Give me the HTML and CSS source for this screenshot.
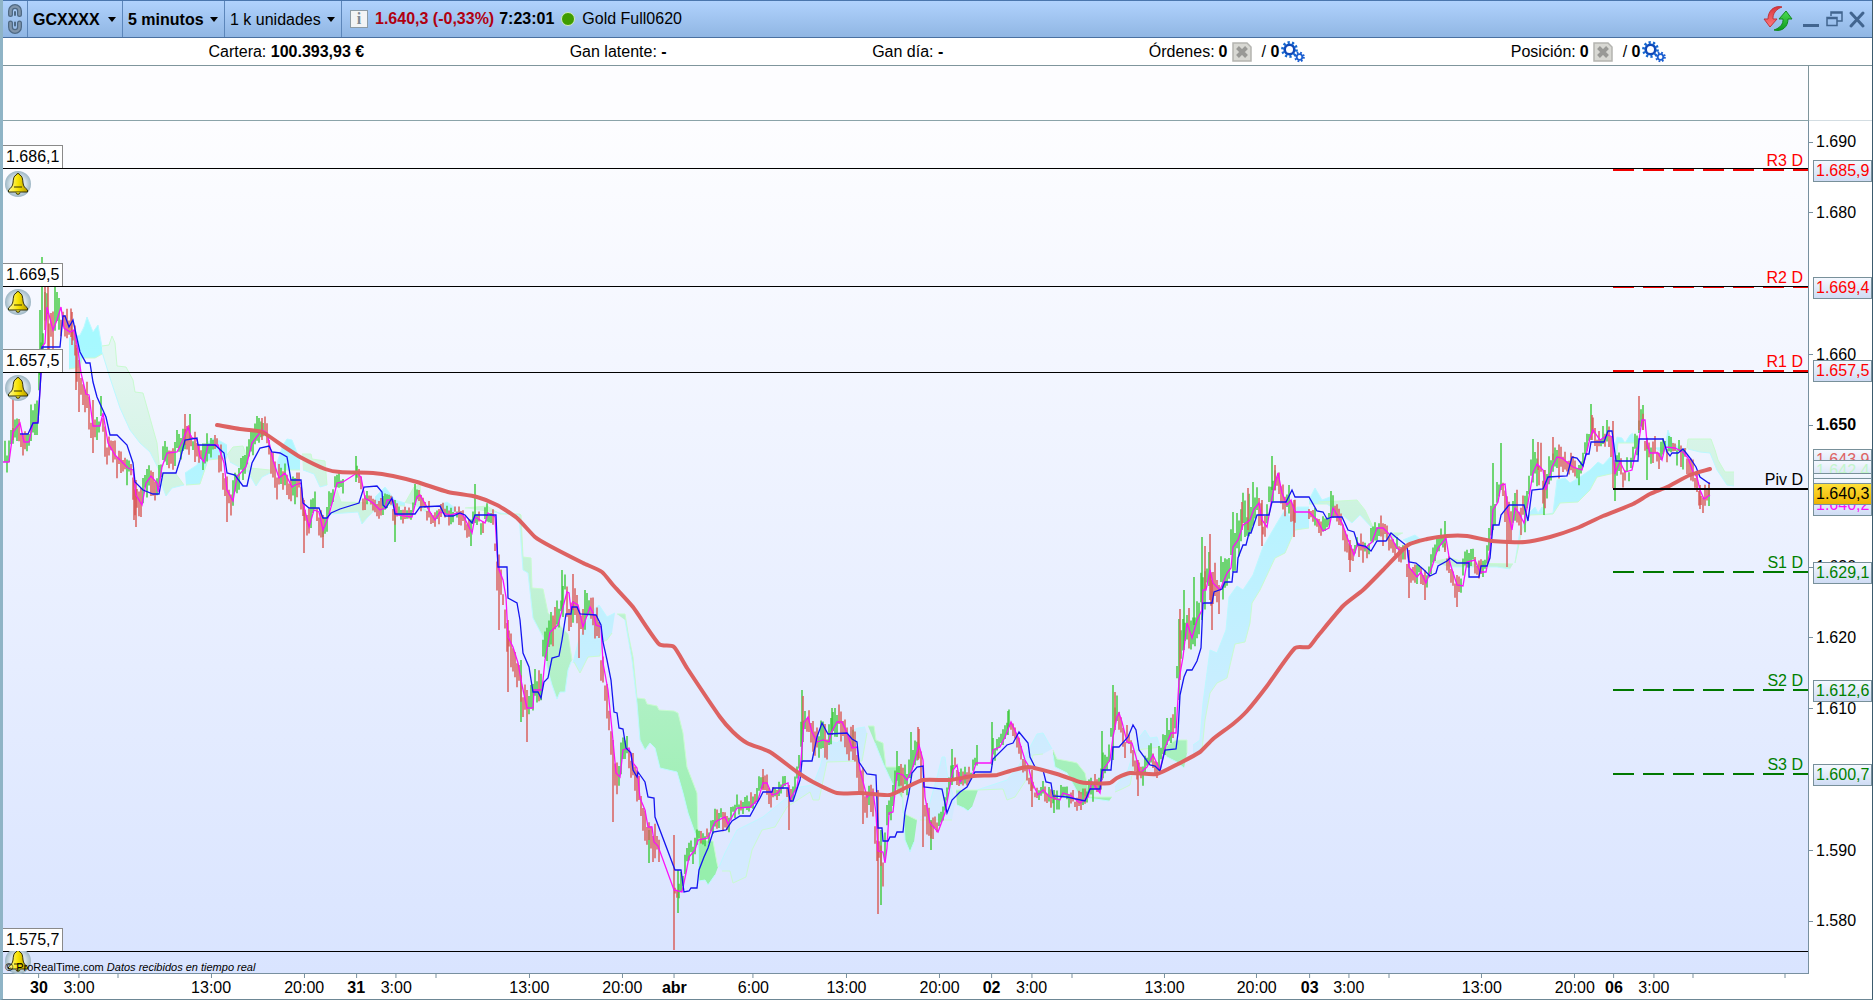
FILE: index.html
```
<!DOCTYPE html>
<html lang="es">
<head>
    <meta charset="UTF-8">
    <meta name="viewport" content="width=device-width, initial-scale=1.0">
    <title>GCXXXX - 5 minutos</title>
    <link rel="stylesheet" href="styles.css">
</head>
<body>
    <svg class="defs" aria-hidden="true">
        <defs>
            <linearGradient id="bellFill" x1="0" x2="1">
                <stop offset="0" stop-color="#fff9a0"/>
                <stop offset="0.5" stop-color="#f8e400"/>
                <stop offset="1" stop-color="#b89c00"/>
            </linearGradient>
            <radialGradient id="bellBack">
                <stop offset="0" stop-color="#f4f8fa"/>
                <stop offset="0.6" stop-color="#d5e2e9"/>
                <stop offset="1" stop-color="#9db6c4"/>
            </radialGradient>
            <linearGradient id="arrowRed" x1="0" x2="0" y1="0" y2="1">
                <stop offset="0" stop-color="#d8343c"/>
                <stop offset="1" stop-color="#ff7a7e"/>
            </linearGradient>
            <linearGradient id="arrowGreen" x1="0" x2="0" y1="0" y2="1">
                <stop offset="0" stop-color="#4fdc55"/>
                <stop offset="1" stop-color="#0c9a1c"/>
            </linearGradient>
        </defs>
        <symbol id="bell" viewBox="0 0 26 26">
            <circle cx="13" cy="13" r="13" fill="url(#bellBack)"/>
            <path d="M13 2.500c-1 0-1.500.6-1.700 1.400C8.500 5 8.400 8 8 12c-.3 3-2 5-4.500 7v2h19v-2C20 17 18.300 15 18 12c-.4-4-.5-7-3.300-8.100C14.500 3.100 14 2.500 13 2.500z" fill="url(#bellFill)" stroke="#33300a"/>
            <path d="M9 16h8M11 21.500a2 1.800 0 0 0 4 0" fill="#f0dc00" stroke="#33300a"/>
        </symbol>
        <symbol id="cancel" viewBox="0 0 20 20">
            <path d="M1 1h14l4 4v14H1z" fill="#d8d8d3" stroke="#b4b4b0" stroke-width="1.500"/>
            <path d="M5.500 5.500l9 9M14.500 5.500l-9 9" stroke="#999996" stroke-width="4"/>
        </symbol>
        <symbol id="gears" viewBox="0 0 24 22">
            <circle cx="8.500" cy="8.500" r="4.800" fill="none" stroke="#1048b8" stroke-width="2.600"/>
            <circle cx="8.500" cy="8.500" r="6.900" fill="none" stroke="#1668d0" stroke-width="3" stroke-dasharray="2.170 2.170"/>
            <circle cx="18.500" cy="16" r="2.800" fill="none" stroke="#1c5fd0" stroke-width="1.800"/>
            <circle cx="18.500" cy="16" r="4.300" fill="none" stroke="#1c5fd0" stroke-width="2" stroke-dasharray="1.700 1.700"/>
        </symbol>
    </svg>

    <div class="window">
        <header class="toolbar">
            <button class="link-button" aria-label="Vincular">
                <svg width="16" height="30" viewBox="0 0 16 30" fill="none" stroke-linecap="round">
                    <path d="M3.500 10.500V7a4.500 4.500 0 0 1 9 0v3.500M3.500 19v4a4.500 4.500 0 0 0 9 0v-4" stroke="#4e6984" stroke-width="5"/>
                    <path d="M3.500 10.500V7a4.500 4.500 0 0 1 9 0v3.500M3.500 19v4a4.500 4.500 0 0 0 9 0v-4" stroke="#8095ab" stroke-width="2.500"/>
                    <path d="M8 8v3M8 18.500v3" stroke="#4e6984" stroke-width="2"/>
                </svg>
            </button>
            <div class="picker picker-code">
                <select class="bold" aria-label="Valor"><option>GCXXXX</option></select>
            </div>
            <div class="picker picker-time">
                <select class="bold" aria-label="Marco temporal"><option>5 minutos</option></select>
            </div>
            <div class="picker picker-units">
                <select aria-label="Unidades"><option>1 k unidades</option></select>
            </div>
            <div class="quote">
                <button class="info" aria-label="Información">i</button>
                <span class="price">1.640,3 (-0,33%)</span>
                <span class="bold">7:23:01</span>
                <span class="status"></span>
                <span>Gold Full0620</span>
            </div>
            <div class="window-buttons">
                <button class="refresh" aria-label="Actualizar">
                    <svg width="30" height="28" viewBox="0 0 30 28">
                        <path d="M19 2C11 0 5 6 5 14H1l6 8 7-8h-4c-.5-5 3-10 9-12z" fill="url(#arrowRed)" stroke="#c0343a"/>
                        <path d="M11 25c8 2 14-3 14-11h4l-6-8-7 8h4c.5 5-3 9-9 11z" fill="url(#arrowGreen)" stroke="#12891f"/>
                    </svg>
                </button>
                <button aria-label="Minimizar">
                    <svg width="18" height="20" viewBox="0 0 18 20"><path d="M1 16.500h16" stroke="#42658f" stroke-width="3"/></svg>
                </button>
                <button aria-label="Restaurar">
                    <svg width="18" height="20" viewBox="0 0 18 20" fill="none" stroke="#42658f" stroke-width="1.500">
                        <path d="M6 7V3h11v9h-5M6 4h11"/>
                        <path d="M2 8.500h10v8H2zM2 9.500h10"/>
                    </svg>
                </button>
                <button aria-label="Cerrar">
                    <svg width="18" height="20" viewBox="0 0 18 20"><path d="M3 4l12 13M15 4L3 17" stroke="#42658f" stroke-width="3" stroke-linecap="round"/></svg>
                </button>
            </div>
        </header>

        <div class="account">
            <div>Cartera: <b>100.393,93 €</b></div>
            <div>Gan latente: <b>-</b></div>
            <div>Gan día: <b>-</b></div>
            <div class="orders">Órdenes: <b>0</b>
                <button aria-label="Cancelar órdenes"><svg width="20" height="20"><use href="#cancel"/></svg></button>
                <span>/ <b>0</b></span>
                <button aria-label="Sistemas"><svg width="24" height="22"><use href="#gears"/></svg></button>
            </div>
            <div class="orders">Posición: <b>0</b>
                <button aria-label="Cerrar posición"><svg width="20" height="20"><use href="#cancel"/></svg></button>
                <span>/ <b>0</b></span>
                <button aria-label="Sistemas en posición"><svg width="24" height="22"><use href="#gears"/></svg></button>
            </div>
        </div>

        <main class="chart">
            <div class="blank"></div>
            <div class="blank-axis"></div>
            <div class="plot" id="plot">
                <svg class="drawing" id="drawing" viewBox="3 121 1805 852" preserveAspectRatio="none">
                    <defs>
                        <linearGradient id="cyanCloud" gradientUnits="userSpaceOnUse" x1="0" y1="340" x2="0" y2="800">
                            <stop offset="0" stop-color="#a6f9ff"/>
                            <stop offset="1" stop-color="#d4eaff"/>
                        </linearGradient>
                        <linearGradient id="greenCloud" gradientUnits="userSpaceOnUse" x1="0" y1="360" x2="0" y2="860">
                            <stop offset="0" stop-color="#e4f6f2"/>
                            <stop offset="0.500" stop-color="#bdf1d2"/>
                            <stop offset="1" stop-color="#96efac"/>
                        </linearGradient>
                    </defs>
                </svg>
                <p class="credits">© ProRealTime.com <i>Datos recibidos en tiempo real</i></p>
            </div>
            <div class="price-axis" id="priceAxis"></div>
            <div class="time-axis" id="timeAxis"></div>
            <div class="corner"></div>
        </main>
    </div>
    <script src="script.js"></script>
</body>
</html>
```
FILE: styles.css
```
* {
    box-sizing: border-box;
}
body {
    margin: 0;
    font-family: "Liberation Sans", Arial, sans-serif;
    font-size: 16px;
    color: #000;
}
button {
    display: flex;
    padding: 0;
    border: 0;
    background: none;
}
.bold {
    font-weight: bold;
}
.defs {
    position: absolute;
    width: 0;
    height: 0;
}
.window {
    display: flex;
    flex-direction: column;
    height: 100vh;
    border-left: 3px solid #8fb4c6;
    border-right: 1px solid #3d5b6e;
    border-bottom: 1px solid #6d8795;
    background: #fff;
}

/* barra superior */
.toolbar {
    display: flex;
    height: 38px;
    border-top: 1px solid #4a76ad;
    border-bottom: 1px solid #4a70a0;
    background: linear-gradient(#b0d2fd, #90b6e3);
}
.link-button {
    align-items: center;
    justify-content: center;
    width: 24px;
}
.picker {
    position: relative;
    border-left: 1px solid #5c86ba;
}
.picker::after {
    content: "";
    position: absolute;
    right: 6px;
    top: 16px;
    border: 4px solid transparent;
    border-top: 5px solid #000;
    pointer-events: none;
}
.picker select {
    width: 100%;
    height: 100%;
    padding: 0 0 0 5px;
    border: 0;
    appearance: none;
    background: none;
    font-family: inherit;
    font-size: 16px;
    color: #000;
}
.picker-code {
    width: 95px;
}
.picker-time {
    width: 102px;
}
.picker-units {
    width: 117px;
}
.quote {
    display: flex;
    flex: 1;
    align-items: center;
    gap: 5px;
    padding-left: 8px;
    border-left: 1px solid #5c86ba;
    white-space: nowrap;
}
.info {
    justify-content: center;
    width: 18px;
    height: 18px;
    margin-right: 2px;
    border: 1px solid #8c9ba5;
    background: #f2f4f5;
    color: #7d8a93;
    font: bold 16px/16px "Liberation Serif", serif;
}
.price {
    color: #b00010;
    font-weight: bold;
}
.status {
    width: 14px;
    height: 14px;
    margin: 0 2px;
    border: 1px solid #d3f0b8;
    border-radius: 50%;
    background: #3f9c00;
}
.window-buttons {
    display: flex;
    align-items: center;
    gap: 5px;
    padding-right: 6px;
}
.refresh {
    margin-right: 4px;
}

/* resumen de la cuenta */
.account {
    display: flex;
    align-items: center;
    justify-content: space-evenly;
    height: 28px;
    border-bottom: 1px solid #7f959c;
    white-space: nowrap;
}
.orders {
    display: flex;
    align-items: center;
    gap: 4px;
}
.orders span {
    margin-left: 6px;
}
.orders button + span + button {
    margin-left: -2px;
}

/* grafico */
.chart {
    display: grid;
    flex: 1;
    grid-template-columns: 1fr 63px;
    grid-template-rows: 55px 1fr 25px;
    min-height: 0;
}
.blank {
    border-right: 1px solid #7f959c;
    border-bottom: 1px solid #8ba4aa;
    background: #fdfdff;
}
.blank-axis {
    border-bottom: 1px solid #d3dde2;
}
.plot {
    position: relative;
    border-right: 1px solid #7890a0;
    border-bottom: 1px solid #7890a0;
    background: linear-gradient(#fdfdff, #d9e4ff);
}
.drawing {
    position: absolute;
    width: 100%;
    height: 100%;
}
.drawing path {
    fill: none;
    vector-effect: non-scaling-stroke;
}
.drawing .cloud-cyan {
    fill: url(#cyanCloud);
}
.drawing .cloud-green {
    fill: url(#greenCloud);
}
.drawing .edge-cyan {
    stroke: #bdf8ff;
}
.drawing .edge-green {
    stroke: #c9fbd0;
}
.drawing .bars-up {
    stroke: #45cb45;
    stroke-width: 1.5;
}
.drawing .bars-down {
    stroke: #d9605e;
    stroke-width: 1.5;
}
.drawing .fast {
    stroke: #fa10fa;
    stroke-width: 1.3;
}
.drawing .slow {
    stroke: #1414f0;
    stroke-width: 1.3;
}
.drawing .average {
    stroke: #dd6262;
    stroke-width: 4;
    stroke-linecap: round;
    stroke-linejoin: round;
}
.drawing .alert {
    stroke: #000;
    stroke-width: 1;
    shape-rendering: crispEdges;
}
.drawing .pivot {
    stroke-width: 2;
    stroke-dasharray: 21 9;
}
.drawing .red {
    stroke: #f00000;
}
.drawing .green {
    stroke: #007800;
}
.drawing .black {
    stroke: #000;
    stroke-dasharray: none;
}
.level-name {
    position: absolute;
    right: 5px;
    line-height: 16px;
    transform: translateY(-100%);
}
.level-name.red,
.price-tag.red {
    color: #f00;
}
.level-name.green,
.price-tag.green {
    color: #008000;
}
.alert-tag {
    position: absolute;
    left: 0;
    padding: 0 3px;
    border: 1px solid #8a8a8a;
    border-left: 0;
    border-bottom: 0;
    background: #fff;
    line-height: 22px;
    transform: translateY(-100%);
}
.alert-bell {
    position: absolute;
    left: 2px;
    width: 26px;
    height: 26px;
}
.credits {
    position: absolute;
    left: 2px;
    bottom: 0;
    margin: 0;
    font-size: 11px;
    line-height: 12px;
}

/* ejes */
.price-axis,
.time-axis {
    position: relative;
}
.price-axis span {
    position: absolute;
    left: 0;
    display: flex;
    align-items: center;
    gap: 3px;
    line-height: 20px;
    transform: translateY(-50%);
}
.price-axis span::before {
    content: "";
    width: 4px;
    border-top: 1px solid #7890a0;
}
.price-axis .price-tag {
    left: 4px;
    right: 0;
    height: 22px;
    padding-left: 2px;
    border: 1px solid #78909a;
    background: linear-gradient(#f4f8ff, #cfdcf4);
    overflow: hidden;
}
.price-axis .price-tag::before {
    content: none;
}
.price-axis .rose {
    color: #dd6262;
}
.price-axis .pale {
    color: #c4f5cc;
}
.price-axis .magenta {
    color: #fa10fa;
}
.price-axis .last {
    background: linear-gradient(#ffe03a, #efb400);
    z-index: 1;
}
.time-axis span {
    position: absolute;
    top: 0;
    display: flex;
    flex-direction: column;
    align-items: center;
    line-height: 20px;
    transform: translateX(-50%);
}
.time-axis span::before {
    content: "";
    height: 4px;
    border-left: 1px solid #7890a0;
}
```
FILE: script.js
```
const LEFT = 3, TOP = 121, WIDTH = 1805, HEIGHT = 852;
const plot = document.getElementById('plot');
const drawing = document.getElementById('drawing');

const topOf = y => ((y - TOP) / HEIGHT * 100) + '%';
const leftOf = x => ((x - LEFT) / WIDTH * 100) + '%';
const yOf = price => 142 + (1690 - price) * 7.077;

// "x,y x,y ..." -> [[x, y], ...]
const points = text => text.trim().split(/\s+/).map(p => p.split(',').map(Number));

function addPath(className, d) {
    const path = document.createElementNS('http://www.w3.org/2000/svg', 'path');
    path.setAttribute('class', className);
    path.setAttribute('d', d);
    drawing.appendChild(path);
}

function addLabel(parent, className, text, side, value) {
    const label = document.createElement('span');
    label.className = className;
    label.textContent = text;
    label.style[side] = value;
    parent.appendChild(label);
}

const toPath = list => 'M' + list.map(p => p.join(' ')).join('L');

// curva suave que pasa por todos los puntos
function toCurve(list) {
    let d = 'M' + list[0].join(' ');
    for (let i = 0; i < list.length - 1; i++) {
        const a = list[Math.max(i - 1, 0)], b = list[i], c = list[i + 1], e = list[Math.min(i + 2, list.length - 1)];
        const step = (c[0] - b[0]) / 5;
        const s1 = (c[1] - a[1]) / (c[0] - a[0]);
        const s2 = (e[1] - b[1]) / (e[0] - b[0]);
        d += `C${(b[0] + step).toFixed(1)} ${(b[1] + s1 * step).toFixed(1)} ${(c[0] - step).toFixed(1)} ${(c[1] - s2 * step).toFixed(1)} ${c[0]} ${c[1]}`;
    }
    return d;
}

// media lenta, en escalones
const slow = points(`
20,434 28,434 33,423 38,423 41,373 42,347 60,347 63,316 65,316 69,327 73,320 76,334 80,352 86,363 90,363 93,382 97,397 106,417 110,435 117,435 127,445 133,463
135,482 143,490 153,494 159,494 163,473 176,473 180,460 185,440 197,438 198,445 215,445 224,453 227,473 235,475 243,486 247,486 252,463 260,448 269,446 272,452
280,453 287,457 291,480 301,480 303,503 309,508 319,508 323,518 327,518 331,513 340,509 359,503 364,487 377,486 382,492 383,505 386,508 392,498 395,514 415,514
420,507 440,506 445,516 453,516 460,513 465,515 472,523 475,515 496,515 498,567 507,567 508,598 517,603 520,620 523,653 529,667 533,692 538,692 541,698 544,682
548,678 552,658 559,656 562,640 566,614 571,614 572,607 577,607 580,614 596,615 601,625 603,642 607,660 611,680 614,712 617,713 619,728 623,729 626,748 631,753
633,770 637,777 638,772 645,782 648,797 654,798 655,817 675,870 681,870 684,892 689,891 691,888 697,888 699,870 704,857 708,848 713,832 726,830 732,821 740,816
750,816 756,805 760,798 763,792 772,792 773,788 788,788 790,801 793,801 796,792 800,780 802,761 812,761 817,737 822,723 828,734 847,733 852,739 857,742 859,762
867,774 876,775 878,828 882,828 883,841 888,841 890,837 895,837 897,832 903,832 905,812 909,793 912,773 917,767 923,766 924,787 942,789 947,813 952,800 960,792
967,787 975,772 991,772 993,759 1007,745 1013,743 1019,732 1028,743 1030,757 1035,767 1043,770 1046,782 1051,783 1053,796 1067,797 1085,801 1090,789 1100,789
1102,770 1111,770 1113,747 1119,747 1128,737 1133,725 1136,730 1139,750 1150,765 1155,766 1160,771 1165,750 1176,749 1178,733 1180,695 1184,677 1187,670 1192,670
1197,661 1201,648 1203,603 1212,603 1214,592 1222,589 1225,582 1232,582 1233,572 1237,572 1238,558 1243,545 1246,545 1249,533 1251,533 1257,515 1269,515 1272,502
1286,502 1292,490 1295,497 1309,497 1317,511 1323,512 1327,519 1332,517 1342,517 1348,530 1354,532 1358,545 1365,546 1371,551 1377,541 1386,541 1391,533 1397,538
1407,546 1409,562 1416,563 1423,569 1430,576 1436,573 1438,566 1447,561 1450,558 1457,563 1469,563 1469,577 1479,577 1481,566 1487,566 1490,558 1493,525 1499,525
1501,515 1509,505 1524,505 1528,521 1532,490 1543,489 1548,477 1567,476 1572,457 1577,458 1583,466 1586,454 1589,454 1591,442 1604,442 1608,431 1612,431 1616,461
1638,461 1639,439 1663,439 1667,452 1670,456 1672,453 1678,453 1683,449 1690,458 1696,467 1700,477 1710,484`);

// media rapida
const fast = points(`
3,462 9,462 13,432 20,423 24,442 29,442 33,423 38,422 41,373 42,347 45,343 47,307 53,330 57,320 61,307 64,328 70,332 74,330 78,350 81,373 86,394 89,395 93,426
100,426 103,413 108,443 115,455 128,468 133,470 136,495 142,505 146,483 151,476 157,483 158,492 162,467 167,453 177,452 183,440 188,427 191,437 197,440 200,457
204,462 208,445 218,445 224,463 227,490 233,501 237,477 246,467 252,443 262,430 267,433 273,460 279,478 285,473 292,487 295,485 301,483 303,503 309,527 314,510
319,512 323,530 328,518 333,500 337,483 343,482 357,473 361,477 365,498 373,503 380,510 385,508 387,500 393,500 397,515 412,517 417,497 420,495 427,507 435,520
440,512 450,515 457,513 463,515 472,533 475,517 485,523 488,513 495,517 498,567 503,580 506,597 508,637 513,647 518,663 522,685 527,708 533,708 534,690 542,690
545,660 550,632 558,625 563,607 567,592 569,593 571,610 573,602 578,605 583,627 590,607 593,613 596,625 601,627 603,663 608,690 612,730 616,773 620,777 623,750
629,748 633,763 637,768 640,798 645,810 648,827 652,827 654,842 658,846 674,890 682,892 686,873 689,857 695,850 698,840 708,838 715,822 725,817 728,824 737,808
750,807 758,800 763,783 767,783 772,795 778,793 783,785 788,783 790,800 797,787 801,760 804,723 808,717 812,732 817,742 823,740 829,742 831,733 837,722 842,722
847,733 852,748 857,747 860,770 867,797 873,792 876,813 878,851 883,852 885,863 887,848 889,813 893,812 897,773 903,775 907,780 912,770 919,745 923,760 925,797
930,823 938,832 945,813 948,797 953,770 957,765 960,782 965,775 972,777 976,763 991,763 993,750 1000,747 1005,737 1011,722 1018,737 1025,760 1028,765 1032,782
1038,795 1043,790 1050,797 1060,800 1063,793 1070,795 1080,803 1088,797 1092,782 1100,793 1103,770 1110,760 1113,737 1117,717 1119,713 1122,722 1127,742 1132,743
1136,757 1140,773 1147,767 1153,755 1160,770 1165,748 1171,733 1176,733 1179,680 1183,657 1187,623 1192,638 1197,620 1202,610 1203,590 1206,590 1210,570 1213,583
1220,590 1227,573 1231,568 1233,547 1238,540 1243,525 1250,520 1254,509 1259,503 1262,520 1267,527 1271,503 1274,488 1278,473 1282,493 1287,505 1291,500 1295,512
1309,512 1317,520 1323,531 1329,528 1333,508 1342,523 1347,537 1354,555 1358,543 1365,548 1372,542 1377,528 1383,528 1390,535 1397,548 1402,552 1407,545 1409,567
1417,577 1421,572 1426,583 1432,567 1438,548 1446,538 1450,563 1457,585 1463,586 1467,562 1475,560 1480,572 1486,572 1490,550 1493,510 1498,502 1501,485 1505,484
1508,513 1512,530 1515,508 1519,513 1524,523 1528,503 1533,473 1537,464 1543,470 1546,490 1552,467 1557,457 1562,458 1568,463 1573,467 1582,470 1586,455 1590,438
1593,430 1600,440 1608,435 1612,437 1615,473 1620,462 1625,472 1632,470 1636,450 1638,447 1642,420 1645,420 1647,443 1650,453 1658,453 1662,460 1665,447 1675,448
1683,452 1688,458 1693,472 1697,477 1700,490 1704,499 1710,495`);

const average = points(`
217,425 240,429 262,432 283,446 300,457 325,469 340,472 373,473 393,476 417,482 448,492 477,497 497,505 517,518 535,537 550,546 583,563 602,572 613,585 633,607
659,644 674,647 687,668 720,717 733,732 747,743 770,752 797,772 813,782 837,793 860,793 890,795 907,787 923,780 950,780 973,776 997,775 1010,771 1028,767 1057,774
1080,782 1087,783 1110,783 1117,778 1130,773 1157,774 1178,764 1200,752 1213,739 1233,724 1247,711 1267,686 1295,648 1309,647 1317,637 1343,606 1363,590 1383,570
1408,545 1427,539 1447,536 1467,536 1492,541 1525,542 1550,537 1577,528 1603,516 1633,504 1650,494 1667,487 1690,475 1710,469`);

// nubes: [color, borde superior, borde inferior]
const clouds = [
    ['cyan', '69,338 80,335 84,327 87,317 93,332 98,325 102,347', '69,369 80,367 82,358 95,358 102,354'],
    ['green', '102,346 109,345 112,336 115,343 117,366 126,367 133,380 135,392 143,393 150,418 157,443 159,463', '102,352 110,378 120,408 130,430 140,443 150,452 159,470'],
    ['green', '159,463 160,473 176,474 184,485', '160,480 166,496 172,488 184,485'],
    ['cyan', '185,473 197,465 207,443 213,438 220,441 227,445', '186,485 200,484 208,460 227,458'],
    ['green', '227,455 233,447 243,446 250,468 260,469 270,470', '230,462 248,472 256,486 262,477 270,473'],
    ['cyan', '277,463 283,445 287,439 292,440 296,450 300,460', '277,470 300,470'],
    ['green', '302,454 311,454 312,459 325,461 327,485', '303,470 314,474 320,487 327,485'],
    ['green', '337,490 341,502 380,503', '330,514 358,512 362,524 367,518 375,510'],
    ['cyan', '375,497 385,487 395,500 405,503', '375,505 405,506'],
    ['green', '405,503 414,487 420,485 422,508 430,512', '415,505 428,513'],
    ['cyan', '440,505 447,502 455,508', '445,514 455,512'],
    ['green', '465,508 487,506 500,514 520,514 521,515 523,557 531,558 532,588 543,589 548,613 568,634 572,660', '490,512 519,515 523,570 528,573 533,618 543,637 547,667 552,685 557,699 560,692 565,692 568,670 571,662'],
    ['cyan', '573,663 578,643 590,613 599,605 607,617 615,613', '574,662 580,673 588,657 600,656 602,642 607,640 612,633'],
    ['green', '617,614 625,614 628,633 633,657 637,698 645,699 647,704 657,706 659,710 674,711 678,713 683,733 687,767 697,793 698,830 699,840 713,841 717,863 718,867', '625,620 632,660 637,703 640,740 645,750 650,743 655,748 660,768 677,772 683,793 688,813 695,833 698,840 699,881 705,880 708,885 715,875'],
    ['cyan', '719,867 725,853 737,830 747,825 763,817 780,803 800,787 813,785 820,767 827,740 837,743 847,733 858,728 865,727', '722,871 730,871 733,883 746,877 752,850 762,830 775,827 787,807 810,792 813,800 819,800 827,762 862,761 867,733'],
    ['green', '868,726 874,726 876,740 883,743 886,767 902,767 903,813 917,820', '875,743 883,763 893,785 903,800 905,840 910,852 914,842'],
    ['cyan', '920,817 927,813 937,777 942,757 945,757 947,773 955,803', '920,820 952,820'],
    ['green', '956,790 965,790 978,790', '957,805 964,808 968,811 972,807'],
    ['cyan', '977,790 1007,780 1018,767 1030,747 1037,734 1043,733 1052,749', '978,790 1003,789 1007,800 1015,797 1028,777 1033,755 1043,754'],
    ['green', '1053,750 1057,759 1073,762 1077,763 1085,773 1090,797 1112,797', '1053,755 1055,767 1067,773 1078,793 1088,798 1109,801'],
    ['cyan', '1115,787 1128,770 1137,740 1145,730 1150,738 1157,737 1160,747', '1115,792 1122,789 1130,785 1137,750 1160,747'],
    ['green', '1163,748 1176,740 1187,740 1187,753', '1167,757 1177,762 1184,768'],
    ['cyan', '1193,745 1200,740 1203,703 1210,650 1217,653 1226,630 1229,597 1237,586 1243,590 1253,575 1263,547 1277,523 1285,510 1290,517 1297,507 1309,507', '1193,757 1202,750 1205,720 1210,693 1217,683 1227,678 1235,644 1245,642 1250,623 1252,603 1260,590 1268,573 1275,558 1285,553 1295,530 1309,528'],
    ['cyan', '1309,500 1315,488 1322,500 1330,497 1331,502', '1309,504 1331,504'],
    ['green', '1318,502 1340,501 1357,500 1365,510 1373,527 1383,533 1403,533', '1327,504 1340,513 1352,523 1360,515 1372,528 1390,541'],
    ['cyan', '1403,540 1415,535 1420,539', '1410,545 1420,543'],
    ['green', '1432,562 1450,558 1467,563 1513,564', '1450,567 1497,567 1510,569'],
    ['cyan', '1515,563 1520,530 1529,513 1535,507 1538,513 1542,507 1544,515 1553,513 1557,480 1565,478 1570,483 1580,477 1590,470 1598,462 1603,465 1612,455 1617,437 1622,438 1625,443 1630,435 1633,433', '1515,563 1522,530 1530,515 1553,514 1560,503 1578,502 1590,490 1597,477 1615,473 1618,443 1635,443'],
    ['cyan', '1655,448 1665,447 1668,430 1672,442 1680,448 1687,449', '1660,452 1687,449'],
    ['green', '1687,448 1688,439 1711,439 1715,450 1718,460 1725,472 1734,472', '1688,449 1700,452 1710,453 1717,470 1727,485 1734,486']
];

// velas mas largas: x, maximo, minimo, sube (1) o baja (0)
const longBars = [
    [13,398,440,0],[40,310,375,1],[42,257,350,1],[45,287,330,0],[48,287,350,0],[55,287,325,1],[57,292,320,1],[72,312,345,0],[76,345,390,0],[79,360,412,0],[93,400,453,0],
    [134,480,520,0],[136,480,527,0],[185,414,445,0],[190,414,440,1],[227,480,522,0],[257,416,440,1],[262,418,440,0],[304,500,553,0],[323,515,548,0],[356,456,482,1],
    [395,500,542,1],[415,484,505,1],[471,520,546,1],[475,484,510,1],[499,560,630,0],[508,620,692,0],[521,660,722,1],[527,690,742,0],[562,570,610,1],[573,574,610,0],
    [579,610,658,0],[585,590,620,1],[613,740,822,0],[649,830,863,1],[674,835,950,0],[678,870,913,1],[763,769,790,0],[789,785,830,0],[802,690,760,1],[803,696,730,0],
    [832,708,735,1],[853,725,760,0],[863,780,824,0],[878,790,914,0],[881,830,905,1],[911,732,770,1],[918,727,760,0],[923,780,847,0],[931,820,850,1],[952,749,785,1],
    [977,745,760,1],[992,722,765,1],[1008,711,735,1],[1032,770,807,0],[1054,790,813,1],[1102,731,780,1],[1113,685,760,1],[1115,692,730,0],[1138,760,796,0],[1167,718,745,1],
    [1179,619,700,1],[1180,609,680,0],[1184,590,650,1],[1194,577,625,1],[1202,537,620,1],[1205,546,590,0],[1210,534,600,0],[1212,580,630,0],[1233,512,560,1],[1242,502,530,0],
    [1248,488,530,0],[1253,482,510,1],[1262,500,546,0],[1272,456,490,1],[1275,465,490,0],[1294,500,537,0],[1331,491,510,1],[1350,540,572,0],[1409,550,598,0],[1425,570,600,0],
    [1445,521,550,1],[1457,575,607,0],[1493,463,530,1],[1501,443,490,1],[1507,500,567,0],[1533,439,480,1],[1538,442,470,0],[1544,470,515,1],[1553,437,460,0],[1591,404,440,1],
    [1592,415,440,0],[1613,421,470,0],[1615,460,501,1],[1639,396,430,0],[1643,405,430,1],[1647,440,480,1],[1700,485,509,0],[1709,485,506,1]
];

// [hasta x, amplitud]
const ranges = [[30, 17], [60, 26], [90, 20], [220, 18], [330, 17], [495, 11], [660, 21], [800, 12], [935, 20], [1090, 11], [1180, 16], [1250, 25], [1300, 18], [1490, 13], [1560, 23], [1712, 14]];
const gaps = [[344, 355], [660, 673], [978, 991], [1296, 1308]];

let seed = 7;
function random() {
    seed = (seed * 16807) % 2147483647;
    return seed / 2147483647;
}

function valueAt(list, x) {
    const i = list.findIndex(p => p[0] >= x);
    if (i < 0) return list[list.length - 1][1];
    if (i === 0) return list[0][1];
    const [x1, y1] = list[i - 1];
    const [x2, y2] = list[i];
    return x2 === x1 ? y2 : y1 + (y2 - y1) * (x - x1) / (x2 - x1);
}

function drawClouds() {
    clouds.forEach(([color, top, bottom]) => {
        const upper = points(top);
        const lower = points(bottom);
        addPath('cloud-' + color, toPath(upper.concat(lower.slice().reverse())) + 'Z');
        addPath(color === 'cyan' ? 'edge-cyan' : 'edge-green', toPath(upper));
        addPath(color === 'cyan' ? 'edge-green' : 'edge-cyan', toPath(lower));
    });
}

function drawBars() {
    let up = '', down = '';
    for (let x = 5; x <= 1710; x += 2) {
        if (gaps.some(g => x >= g[0] && x <= g[1])) continue;
        const size = ranges.find(r => x <= r[0])[1];
        const middle = valueAt(fast, x + 2) + (random() - 0.5) * size * 0.8;
        const slope = valueAt(fast, x + 3) - valueAt(fast, x - 2);
        const high = middle - size * (0.2 + random() * 0.7);
        const low = middle + size * (0.2 + random() * 0.7);
        const bar = `M${x} ${high.toFixed(1)}V${low.toFixed(1)}`;
        if (slope + (random() - 0.5) * 14 < 0) up += bar;
        else down += bar;
    }
    longBars.forEach(([x, high, low, rising]) => {
        const bar = `M${x} ${high}V${low}`;
        if (rising) up += bar;
        else down += bar;
    });
    addPath('bars-up', up);
    addPath('bars-down', down);
}

drawClouds();
drawBars();
addPath('fast', toPath(fast));
addPath('slow', toPath(slow));
addPath('average', toCurve(average));

// pivotes diarios
[
    ['R3 D', 170, 'red'], ['R2 D', 287, 'red'], ['R1 D', 371, 'red'], ['Piv D', 489, 'black'],
    ['S1 D', 572, 'green'], ['S2 D', 690, 'green'], ['S3 D', 774, 'green']
].forEach(([name, y, color]) => {
    addPath('pivot ' + color, `M1613 ${y}H1808`);
    addLabel(plot, 'level-name ' + color, name, 'top', topOf(y - 1));
});

// alertas
[['1.686,1', 168.5], ['1.669,5', 286.5], ['1.657,5', 372.5], ['1.575,7', 951.5]].forEach(([text, y]) => {
    addPath('alert', `M3 ${y}H1808`);
    addLabel(plot, 'alert-tag', text, 'top', topOf(y - 1));
    const bell = document.createElementNS('http://www.w3.org/2000/svg', 'svg');
    bell.setAttribute('class', 'alert-bell');
    bell.innerHTML = '<use href="#bell"/>';
    bell.style.top = topOf(y > 900 ? y - 4 : y + 2);
    plot.insertBefore(bell, plot.querySelector('.credits'));
});

const priceAxis = document.getElementById('priceAxis');
[1690, 1680, 1660, 1650, 1630, 1620, 1610, 1590, 1580].forEach(price => {
    const text = '1.' + (price - 1000);
    addLabel(priceAxis, price === 1650 ? 'bold' : '', text, 'top', topOf(yOf(price)));
});
[
    ['1.685,9', 170.5, 'red'], ['1.669,4', 287.5, 'red'], ['1.657,5', 371, 'red'],
    ['1.640,2', 505, 'magenta'], ['1.643,9', 460, 'rose'], ['1.642,4', 471, 'pale'],
    ['', 484, ''], ['', 489, ''], ['1.640,3', 494, 'last'],
    ['1.629,1', 572, 'green'], ['1.612,6', 690.5, 'green'], ['1.600,7', 774, 'green']
].forEach(([text, y, color]) => addLabel(priceAxis, 'price-tag ' + color, text, 'top', topOf(y)));

const timeAxis = document.getElementById('timeAxis');
[
    ['30', 39], ['3:00', 79], ['', 118], ['13:00', 211], ['20:00', 304], ['31', 356], ['3:00', 396], ['', 436],
    ['13:00', 529], ['20:00', 622], ['abr', 674], ['6:00', 753], ['13:00', 846], ['20:00', 939], ['02', 991],
    ['3:00', 1031], ['', 1071], ['13:00', 1164], ['20:00', 1256], ['03', 1309], ['3:00', 1348], ['', 1388],
    ['13:00', 1481], ['20:00', 1574], ['06', 1613], ['3:00', 1653], ['', 1692], ['', 1784]
].forEach(([text, x]) => addLabel(timeAxis, /:|^$/.test(text) ? '' : 'bold', text, 'left', leftOf(x)));
```
